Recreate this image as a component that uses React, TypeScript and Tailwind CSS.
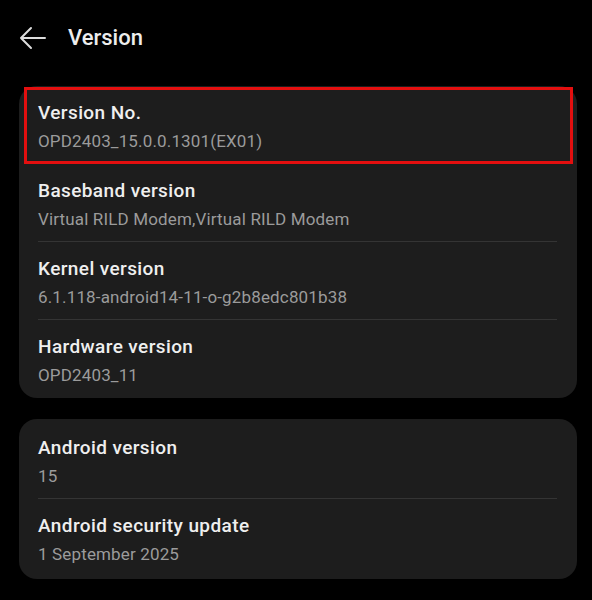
import React from "react";

type Item = { title: string; value: string };

const card1: Item[] = [
  { title: "Version No.", value: "OPD2403_15.0.0.1301(EX01)" },
  { title: "Baseband version", value: "Virtual RILD Modem,Virtual RILD Modem" },
  { title: "Kernel version", value: "6.1.118-android14-11-o-g2b8edc801b38" },
  { title: "Hardware version", value: "OPD2403_11" },
];

const card2: Item[] = [
  { title: "Android version", value: "15" },
  { title: "Android security update", value: "1 September 2025" },
];

function Row({ item, divider }: { item: Item; divider: boolean }) {
  return (
    <div className="h-[78px] flex flex-col pl-[19px] pr-[20px]">
      <div className={`flex-1 flex flex-col pt-[14px] ${divider ? "border-b border-[#343434]" : ""}`}>
        <div className="text-[19px] leading-[25px] font-medium tracking-[0.4px] text-[#efefef]">{item.title}</div>
        <div className="text-[17px] leading-[22px] mt-[5px] tracking-[0.15px] text-[#9b9b9b]">{item.value}</div>
      </div>
    </div>
  );
}

export default function App() {
  return (
    <div
      className="w-[592px] h-[600px] bg-black overflow-hidden"
      style={{ fontFamily: "Roboto, 'Noto Sans', sans-serif" }}
    >
      <div className="h-[75px] flex items-center">
        <svg className="ml-[19px]" width="28" height="24" viewBox="0 0 28 24" fill="none">
          <path d="M2 12 H26 M12 2 L2 12 L12 22" stroke="#dcdcdc" strokeWidth="2" strokeLinecap="round" strokeLinejoin="round" />
        </svg>
        <div className="ml-[21px] text-[22px] font-medium text-[#ededed]">Version</div>
      </div>
      <div className="ml-[19px] mr-[15px] mt-[11px] flex flex-col gap-[21px]">
        <div className="relative bg-[#1d1d1d] rounded-[18px]">
          {card1.map((it, i) => (
            <Row key={it.title} item={it} divider={i > 0 && i < card1.length - 1} />
          ))}
          <div className="absolute left-[5px] top-[1px] w-[549px] h-[77px] border-[3px] border-[#e30f0f]" />
        </div>
        <div className="bg-[#1d1d1d] rounded-[18px] pt-[2px] pb-[2px]">
          {card2.map((it, i) => (
            <Row key={it.title} item={it} divider={i < card2.length - 1} />
          ))}
        </div>
      </div>
    </div>
  );
}
